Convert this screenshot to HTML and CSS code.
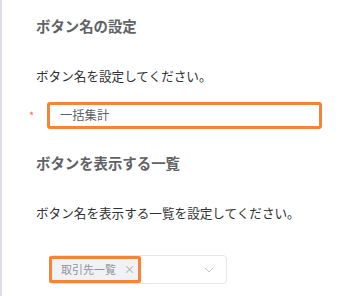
FILE: index.html
```html
<!DOCTYPE html>
<html lang="ja">
<head>
<meta charset="utf-8">
<link rel="stylesheet" href="styles.css">
</head>
<body>
<div class="panel">
  <div class="section-title">ボタン名の設定</div>
  <div class="desc">ボタン名を設定してください。</div>
  <div class="form-row">
    <span class="required">*</span>
    <div class="input">一括集計</div>
  </div>
  <div class="section-title second">ボタンを表示する一覧</div>
  <div class="desc">ボタン名を表示する一覧を設定してください。</div>
  <div class="select-row">
    <div class="select">
      <span class="tag">取引先一覧<span class="close">×</span></span>
      <svg class="chevron" width="10" height="6" viewBox="0 0 10 6"><path d="M1 1 L5 5 L9 1" fill="none" stroke="#c0c4cc" stroke-width="1"/></svg>
    </div>
  </div>
</div>
</body>
</html>
```
FILE: styles.css
```css
html, body {
  margin: 0;
  padding: 0;
  background: #ffffff;
}
body {
  font-family: "Noto Sans CJK JP", "Noto Sans", sans-serif;
  width: 344px;
  height: 296px;
  overflow: hidden;
}
.panel {
  box-sizing: border-box;
  height: 296px;
  border-left: 2px solid #dcdfe6;
  padding-left: 34px;
  padding-top: 16px;
}
.section-title {
  font-size: 14.4px;
  line-height: 20px;
  font-weight: 700;
  color: #606266;
}
.section-title.second {
  margin-top: 24px;
}
.desc {
  margin-top: 30px;
  font-size: 12.6px;
  line-height: 20px;
  color: #303133;
}
.form-row {
  display: flex;
  align-items: center;
  margin-top: 16px;
  margin-left: -7px;
}
.required {
  width: 18px;
  color: #f56c6c;
  font-size: 11px;
  line-height: 11px;
}
.input {
  box-sizing: border-box;
  width: 275px;
  height: 27px;
  border: 3px solid #f5833a;
  border-radius: 3px;
  padding-left: 10px;
  font-size: 12.3px;
  line-height: 21px;
  color: #606266;
}
.select-row {
  margin-top: 32px;
  padding-left: 13px;
}
.select {
  box-sizing: border-box;
  width: 178px;
  height: 29px;
  border: 1px solid #e4e7ed;
  border-radius: 4px;
  display: flex;
  align-items: center;
}
.tag {
  box-sizing: border-box;
  height: 27px;
  width: 92px;
  border: 3px solid #f5833a;
  border-radius: 2px;
  background: #f0f2f5;
  color: #909399;
  font-size: 11px;
  line-height: 21px;
  padding-left: 9px;
  margin-left: -1px;
  display: flex;
  align-items: center;
}
.close {
  margin-left: 8px;
  font-size: 11px;
  color: #a8abb2;
}
.chevron {
  margin-left: auto;
  margin-right: 12px;
}
```
